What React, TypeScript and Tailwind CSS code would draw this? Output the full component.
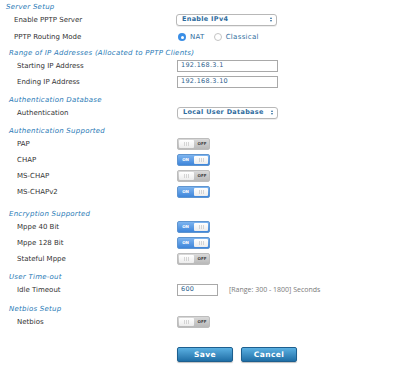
import React from "react";

const font = "font-['DejaVu_Sans',sans-serif]";

function Heading({ children, indent = 9, mt = 0 }: { children: React.ReactNode; indent?: number; mt?: number }) {
  return (
    <div
      className={`h-[10px] leading-[10px] italic text-[7px] text-[#2a7ab6] tracking-[0.25px] ${font}`}
      style={{ paddingLeft: indent, marginTop: mt }}
    >
      {children}
    </div>
  );
}

function Row({ label, children, indent = 17, h = 16 }: { label: string; children?: React.ReactNode; indent?: number; h?: number }) {
  return (
    <div className="flex items-center" style={{ height: h, paddingLeft: indent }}>
      <div className={`shrink-0 text-[7px] text-[#333] ${font}`} style={{ width: 177 - indent }}>
        {label}
      </div>
      <div className="flex items-center">{children}</div>
    </div>
  );
}

function Grip() {
  return (
    <span className="flex gap-[1px]">
      <span className="w-[1px] h-[4px] bg-[#d4d4d4]" />
      <span className="w-[1px] h-[4px] bg-[#d4d4d4]" />
      <span className="w-[1px] h-[4px] bg-[#d4d4d4]" />
    </span>
  );
}

function Toggle({ on }: { on: boolean }) {
  if (on) {
    return (
      <div className="flex w-[33px] h-[12px] rounded-[2px] border border-[#5f95d0] bg-gradient-to-b from-[#7db4ef] to-[#3d85da] overflow-hidden">
        <div className="w-[15px] flex items-center justify-center text-[4px] font-bold text-white font-['DejaVu_Sans',sans-serif]">
          ON
        </div>
        <div className="flex-1 m-[1px] rounded-[1px] bg-gradient-to-b from-white to-[#ececec] flex items-center justify-center">
          <Grip />
        </div>
      </div>
    );
  }
  return (
    <div className="flex w-[33px] h-[12px] rounded-[2px] border border-[#bdbdbd] bg-gradient-to-b from-[#d9d9d9] to-[#b9b9b9] overflow-hidden">
      <div className="w-[15px] m-[1px] rounded-[1px] bg-gradient-to-b from-white to-[#ececec] flex items-center justify-center">
        <Grip />
      </div>
      <div className="flex-1 flex items-center justify-center text-[4px] font-bold text-[#444] font-['DejaVu_Sans',sans-serif]">
        OFF
      </div>
    </div>
  );
}

function Select({ value }: { value: string }) {
  return (
    <div className="relative w-[101px] h-[12px] rounded-[3px] border border-[#b8b8b8] bg-white flex items-center pl-[5px] shadow-[0_1px_0_#eee]">
      <span className={`text-[6.5px] font-semibold text-[#2e6c9e] tracking-[0.3px] ${font}`}>{value}</span>
      <span className="absolute right-[4px] top-[2px] flex flex-col items-center gap-[1px]">
        <span className="w-0 h-0 border-l-[1.5px] border-r-[1.5px] border-b-[2px] border-l-transparent border-r-transparent border-b-[#2e6c9e]" />
        <span className="w-0 h-0 border-l-[1.5px] border-r-[1.5px] border-t-[2px] border-l-transparent border-r-transparent border-t-[#2e6c9e]" />
      </span>
    </div>
  );
}

function Input({ value, w = 101 }: { value: string; w?: number }) {
  return (
    <div
      className="h-[12px] border border-[#a9a9a9] bg-white flex items-center pl-[3px]"
      style={{ width: w }}
    >
      <span className={`text-[6.5px] text-[#2e5f8e] tracking-[0.3px] ${font}`}>{value}</span>
    </div>
  );
}

function Radio({ checked, label }: { checked: boolean; label: string }) {
  return (
    <div className="flex items-center gap-[4px]">
      {checked ? (
        <span className="w-[8px] h-[8px] rounded-full bg-[#3a8ee6] flex items-center justify-center">
          <span className="w-[3px] h-[3px] rounded-full bg-white" />
        </span>
      ) : (
        <span className="w-[8px] h-[8px] rounded-full border border-[#c4c4c4] bg-white" />
      )}
      <span className={`text-[7px] text-[#2e6c9e] tracking-[0.3px] ${font}`}>{label}</span>
    </div>
  );
}

function Button({ children }: { children: React.ReactNode }) {
  return (
    <button className="w-[56px] h-[15px] rounded-[2px] border border-[#1d5f8f] bg-gradient-to-b from-[#5ab0e2] to-[#1f6fa6] text-white text-[7.5px] font-bold tracking-[0.4px] flex items-center justify-center shadow-[0_1px_1px_rgba(0,0,0,0.25)] font-['DejaVu_Sans',sans-serif]">
      {children}
    </button>
  );
}

export default function App() {
  return (
    <div className="w-[400px] h-[372px] bg-white pt-[2px] overflow-hidden">
      <Heading indent={6}>Server Setup</Heading>
      <Row label="Enable PPTP Server" indent={14}>
        <div className="-ml-[1px]">
          <Select value="Enable IPv4" />
        </div>
      </Row>
      <Row label="PPTP Routing Mode" indent={14} h={18}>
        <div className="flex items-center gap-[9px] pl-[1px]">
          <Radio checked label="NAT" />
          <Radio checked={false} label="Classical" />
        </div>
      </Row>

      <Heading mt={2}>Range of IP Addresses (Allocated to PPTP Clients)</Heading>
      <Row label="Starting IP Address">
        <Input value="192.168.3.1" />
      </Row>
      <Row label="Ending IP Address">
        <Input value="192.168.3.10" />
      </Row>

      <Heading mt={5}>Authentication Database</Heading>
      <Row label="Authentication">
        <Select value="Local User Database" />
      </Row>

      <Heading mt={5}>Authentication Supported</Heading>
      <Row label="PAP">
        <Toggle on={false} />
      </Row>
      <Row label="CHAP">
        <Toggle on />
      </Row>
      <Row label="MS-CHAP">
        <Toggle on={false} />
      </Row>
      <Row label="MS-CHAPv2">
        <Toggle on />
      </Row>

      <Heading mt={9}>Encryption Supported</Heading>
      <Row label="Mppe 40 Bit">
        <Toggle on />
      </Row>
      <Row label="Mppe 128 Bit">
        <Toggle on />
      </Row>
      <Row label="Stateful Mppe">
        <Toggle on={false} />
      </Row>

      <Heading mt={5}>User Time-out</Heading>
      <Row label="Idle Timeout">
        <Input value="600" w={41} />
        <span className="ml-[11px] text-[7px] text-[#7a7a7a] font-['Open_Sans',sans-serif]">
          [Range: 300 - 1800] Seconds
        </span>
      </Row>

      <Heading mt={6}>Netbios Setup</Heading>
      <Row label="Netbios">
        <Toggle on={false} />
      </Row>

      <div className="flex gap-[8px] pl-[177px] mt-[17px]">
        <Button>Save</Button>
        <Button>Cancel</Button>
      </div>
    </div>
  );
}
